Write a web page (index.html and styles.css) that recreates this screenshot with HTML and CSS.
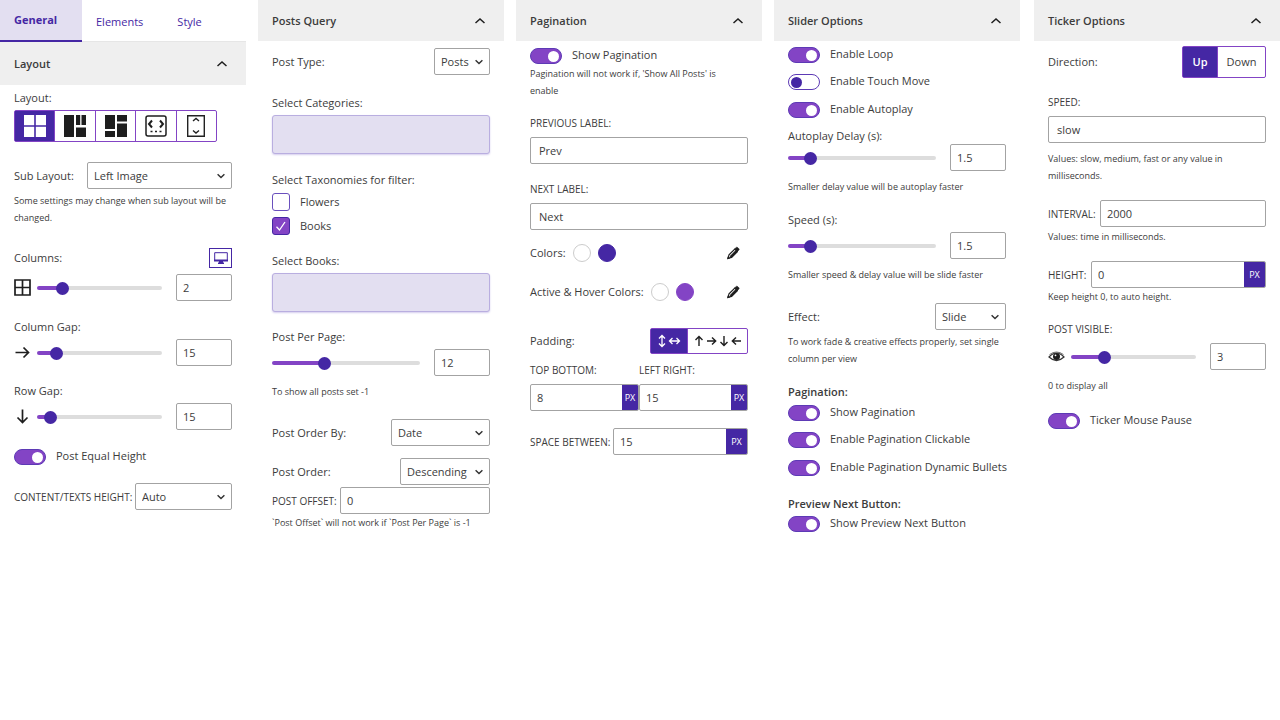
FILE: index.html
```html
<!DOCTYPE html>
<html lang="en">
<head>
<meta charset="utf-8">
<title>Block Settings</title>
<link rel="stylesheet" href="styles.css">
</head>
<body>
<svg class="defs" aria-hidden="true">
  <symbol id="up" viewBox="0 0 12 8"><path d="M1.500 6 6 2l4.500 4" fill="none" stroke="#1e1e1e" stroke-width="1.500"/></symbol>
  <symbol id="down" viewBox="0 0 8 6"><path d="M.6 1.300 4 4.500l3.400-3.200" fill="none" stroke="#333" stroke-width="1.500"/></symbol>
  <symbol id="pencil" viewBox="0 0 14 14"><path d="M2 12.300 3 8.900 8.800 3.100l2.500 2.500-5.800 5.800Z" fill="#fff" stroke="#1e1e1e" stroke-width="1.200"/><path d="M4.600 11.200 10.800 5" stroke="#1e1e1e" stroke-width="2.600"/><path d="m8.800 2.800 1.500-1.400q.7-.5 1.300.1l1.300 1.300q.5.600 0 1.200l-1.500 1.500ZM1.500 12.800l.6-2.300 1.700 1.700Z" fill="#1e1e1e" stroke="#1e1e1e" stroke-width=".6"/></symbol>
</svg>
<main class="panels">
  <section class="panel">
    <nav class="tabs">
      <button class="tab active" type="button">General</button>
      <button class="tab" type="button">Elements</button>
      <button class="tab" type="button">Style</button>
    </nav>
    <button class="head tall" type="button">Layout<svg><use href="#up"/></svg></button>
    <div class="body">
      <div class="label s4">Layout:</div>
      <div class="group layouts s3">
        <button class="on" type="button" aria-label="Grid"><svg width="22" height="22" viewBox="0 0 22 22"><path d="M0 0h10.200v10.200H0zM11.800 0H22v10.200H11.800zM0 11.800h10.200V22H0zM11.800 11.800H22V22H11.800z" fill="#fff"/></svg></button>
        <button type="button" aria-label="Masonry"><svg width="22" height="22" viewBox="0 0 22 22"><path d="M0 0h10v22H0zM12 0h4.200v10H12zM17.500 0H22v10h-4.500zM12 12.500h10V22H12z" fill="#1e1e1e"/></svg></button>
        <button type="button" aria-label="Mosaic"><svg width="22" height="22" viewBox="0 0 22 22"><path d="M0 0h10v14H0zM12 0h10v6.500H12zM0 16h10v6H0zM12 8.500h10V22H12z" fill="#1e1e1e"/></svg></button>
        <button type="button" aria-label="Slider"><svg width="22" height="22" viewBox="0 0 22 22" fill="none" stroke="#1e1e1e" stroke-width="1.500"><rect x="1" y="1" width="20" height="20" rx="2"/><path d="M7 5.500 4 9l3 3.500M15 5.500 18 9l-3 3.500" stroke-width="2"/><path d="M5.500 16.500h2M10 16.500h2M14.500 16.500h2"/></svg></button>
        <button type="button" aria-label="Ticker"><svg width="18" height="22" viewBox="0 0 18 22" fill="none" stroke="#222" stroke-width="1.400"><path d="M.7.700h16.600v20.600H.7zM6 6l3-2.500L12 6M6 15.500 9 18l3-2.500"/></svg></button>
      </div>
      <div class="row s20">
        <label class="label" for="sub">Sub Layout:</label>
        <span class="select w-sub"><select id="sub"><option>Left Image</option></select><svg><use href="#down"/></svg></span>
      </div>
      <p class="help s3">Some settings may change when sub layout will be changed.</p>
      <div class="row s22">
        <label class="label" for="cols">Columns:</label>
        <button class="device" type="button" aria-label="Desktop"><svg width="14" height="12" viewBox="0 0 14 12"><path d="M.7.700h12.600v7.800H.7z" fill="none" stroke="#4527a4"/><path d="M0 7.500h14v2H9v1h1V12H4v-1.500h1v-1H0z" fill="#4527a4"/></svg></button>
      </div>
      <div class="slide s6">
        <svg class="ico" viewBox="0 0 17 17"><path d="M1 1h15v15H1zM8.500 1v15M1 8.500h15" fill="none" stroke="#1e1e1e" stroke-width="1.700"/></svg>
        <input class="range" type="range" aria-label="Columns" value="17" style="--fill:20%">
        <input class="num" id="cols" type="text" value="2">
      </div>
      <label class="label s17" for="cgap">Column Gap:</label>
      <div class="slide s3">
        <svg class="ico" viewBox="0 0 17 17"><path d="M1.500 8.500h13M9.500 3.500l5 5-5 5" fill="none" stroke="#1e1e1e" stroke-width="1.700"/></svg>
        <input class="range" type="range" aria-label="Column gap" value="12" style="--fill:16%">
        <input class="num" id="cgap" type="text" value="15">
      </div>
      <label class="label s16" for="rgap">Row Gap:</label>
      <div class="slide s3">
        <svg class="ico" viewBox="0 0 17 17"><path d="M8.500 1.500v13M3.500 9.500l5 5 5-5" fill="none" stroke="#1e1e1e" stroke-width="1.700"/></svg>
        <input class="range" type="range" aria-label="Row gap" value="6" style="--fill:11%">
        <input class="num" id="rgap" type="text" value="15">
      </div>
      <label class="toggle s17"><input type="checkbox" checked>Post Equal Height</label>
      <div class="row s18">
        <label class="caps" for="cth">Content/Texts Height:</label>
        <span class="select w-auto"><select id="cth"><option>Auto</option></select><svg><use href="#down"/></svg></span>
      </div>
    </div>
  </section>

  <section class="panel">
    <button class="head" type="button">Posts Query<svg><use href="#up"/></svg></button>
    <div class="body">
      <div class="row s7">
        <label class="label" for="ptype">Post Type:</label>
        <span class="select w-posts"><select id="ptype"><option>Posts</option></select><svg><use href="#down"/></svg></span>
      </div>
      <label class="label s19" for="cats">Select Categories:</label>
      <input class="tokens s3" id="cats" type="text">
      <div class="label s17">Select Taxonomies for filter:</div>
      <label class="check s4"><input type="checkbox"><svg viewBox="0 0 18 18"></svg>Flowers</label>
      <label class="check s6"><input type="checkbox" checked><svg viewBox="0 0 18 18"><path d="m4.500 9.800 3 3.200L13 5" fill="none" stroke="#fff" stroke-width="1.300"/></svg>Books</label>
      <label class="label s17" for="books">Select Books:</label>
      <input class="tokens s3" id="books" type="text">
      <label class="label s16" for="ppp">Post Per Page:</label>
      <div class="slide s3">
        <input class="range" type="range" aria-label="Post per page" value="34" style="--fill:36%">
        <input class="num" id="ppp" type="text" value="12">
      </div>
      <p class="help s7">To show all posts set -1</p>
      <div class="row s19">
        <label class="label" for="oby">Post Order By:</label>
        <span class="select w-date"><select id="oby"><option>Date</option></select><svg><use href="#down"/></svg></span>
      </div>
      <div class="row s12">
        <label class="label" for="ord">Post Order:</label>
        <span class="select w-desc"><select id="ord"><option>Descending</option></select><svg><use href="#down"/></svg></span>
      </div>
      <div class="row s2">
        <label class="caps" for="off">Post Offset:</label>
        <input class="text w-offset" id="off" type="text" value="0">
      </div>
      <p class="help">`Post Offset` will not work if `Post Per Page` is -1</p>
    </div>
  </section>

  <section class="panel">
    <button class="head" type="button">Pagination<svg><use href="#up"/></svg></button>
    <div class="body">
      <label class="toggle s5"><input type="checkbox" checked>Show Pagination</label>
      <p class="help s1">Pagination will not work if, 'Show All Posts' is enable</p>
      <label class="caps s15" for="prev">Previous Label:</label>
      <input class="text s5" id="prev" type="text" value="Prev">
      <label class="caps s16" for="next">Next Label:</label>
      <input class="text s5" id="next" type="text" value="Next">
      <div class="colors s14">
        <span class="label">Colors:</span><i class="dot"></i><i class="dot deep"></i>
        <button class="edit" type="button" aria-label="Edit colors"><svg><use href="#pencil"/></svg></button>
      </div>
      <div class="colors s21">
        <span class="label">Active &amp; Hover Colors:</span><i class="dot"></i><i class="dot violet"></i>
        <button class="edit" type="button" aria-label="Edit active and hover colors"><svg><use href="#pencil"/></svg></button>
      </div>
      <div class="row s27">
        <span class="label">Padding:</span>
        <div class="group sides">
          <button class="on" type="button" aria-label="Vertical and horizontal"><svg width="24" height="14" viewBox="0 0 24 14" fill="none" stroke="#fff" stroke-width="1.300"><path d="M5 1.500v11M2 4.500l3-3 3 3M2 9.500l3 3 3-3M12.500 7h10M15.500 4l-3 3 3 3M19.500 4l3 3-3 3"/></svg></button>
          <button type="button" aria-label="Each side"><svg width="48" height="12" viewBox="0 0 48 12" fill="none" stroke="#1e1e1e" stroke-width="1.400"><path d="M5 11V1.500M1.500 5 5 1.500 8.500 5M13 6h9M18 2.500 21.700 6 18 9.500M30 1v9.500M26.500 7l3.500 3.500L33.500 7M47 6h-9M42 2.500 38.300 6 42 9.500"/></svg></button>
        </div>
      </div>
      <div class="pair s7">
        <div>
          <label class="caps" for="tb">Top Bottom:</label>
          <span class="unit s5"><input id="tb" type="text" value="8"><b>PX</b></span>
        </div>
        <div>
          <label class="caps" for="lr">Left Right:</label>
          <span class="unit s5"><input id="lr" type="text" value="15"><b>PX</b></span>
        </div>
      </div>
      <div class="row s17">
        <label class="caps" for="sb">Space Between:</label>
        <span class="unit w-space"><input id="sb" type="text" value="15"><b>PX</b></span>
      </div>
    </div>
  </section>

  <section class="panel">
    <button class="head" type="button">Slider Options<svg><use href="#up"/></svg></button>
    <div class="body">
      <label class="toggle s4"><input type="checkbox" checked>Enable Loop</label>
      <label class="toggle s9"><input type="checkbox">Enable Touch Move</label>
      <label class="toggle s10"><input type="checkbox" checked>Enable Autoplay</label>
      <label class="label tight s10" for="delay">Autoplay Delay (s):</label>
      <div class="slide">
        <input class="range" type="range" aria-label="Autoplay delay" value="12" style="--fill:16%">
        <input class="num" id="delay" type="text" value="1.5">
      </div>
      <p class="help s7">Smaller delay value will be autoplay faster</p>
      <label class="label tight s17" for="speed">Speed (s):</label>
      <div class="slide s4">
        <input class="range" type="range" aria-label="Speed" value="12" style="--fill:16%">
        <input class="num" id="speed" type="text" value="1.5">
      </div>
      <p class="help s7">Smaller speed &amp; delay value will be slide faster</p>
      <div class="row s20">
        <label class="label" for="fx">Effect:</label>
        <span class="select w-slide"><select id="fx"><option>Slide</option></select><svg><use href="#down"/></svg></span>
      </div>
      <p class="help s3">To work fade &amp; creative effects properly, set single column per view</p>
      <h3 class="sub s16">Pagination:</h3>
      <label class="toggle s2"><input type="checkbox" checked>Show Pagination</label>
      <label class="toggle s9"><input type="checkbox" checked>Enable Pagination Clickable</label>
      <label class="toggle s10"><input type="checkbox" checked>Enable Pagination Dynamic Bullets</label>
      <h3 class="sub s19">Preview Next Button:</h3>
      <label class="toggle s1"><input type="checkbox" checked>Show Preview Next Button</label>
    </div>
  </section>

  <section class="panel">
    <button class="head" type="button">Ticker Options<svg><use href="#up"/></svg></button>
    <div class="body">
      <div class="row s5">
        <span class="label">Direction:</span>
        <div class="group words"><button class="on" type="button">Up</button><button type="button">Down</button></div>
      </div>
      <label class="caps s15" for="tspeed">Speed:</label>
      <input class="text s5" id="tspeed" type="text" value="slow">
      <p class="help s7">Values: slow, medium, fast or any value in milliseconds.</p>
      <div class="row s16">
        <label class="caps" for="int">Interval:</label>
        <input class="text w-interval" id="int" type="text" value="2000">
      </div>
      <p class="help s1">Values: time in milliseconds.</p>
      <div class="row s16">
        <label class="caps" for="hgt">Height:</label>
        <span class="unit w-height"><input id="hgt" type="text" value="0"><b>PX</b></span>
      </div>
      <p class="help">Keep height 0, to auto height.</p>
      <label class="caps s15" for="vis">Post Visible:</label>
      <div class="slide s5">
        <svg class="ico" viewBox="0 0 17 17"><path d="M1 9q7.500-8 15 0-7.500 7-15 0Z" fill="#fff" stroke="#333" stroke-width="1.200"/><path d="M1.500 6.500q7-5 14 0" fill="none" stroke="#555" stroke-width=".8"/><circle cx="8.500" cy="8.500" r="3.500" fill="#1e1e1e"/><circle cx="7.500" cy="7.300" r=".9" fill="#fff"/></svg>
        <input class="range" type="range" aria-label="Post visible" value="24" style="--fill:26%">
        <input class="num" id="vis" type="text" value="3">
      </div>
      <p class="help s7">0 to display all</p>
      <label class="toggle s17"><input type="checkbox" checked>Ticker Mouse Pause</label>
    </div>
  </section>
</main>
</body>
</html>
```
FILE: styles.css
```css
:root {
  --deep: #4527a4;
  --violet: #8344c5;
  --tint: #e3dff1;
  --line: #a3a3a3;
}
* { box-sizing: border-box; }
body {
  margin: 0;
  background: #fff;
  color: #3c3c3c;
  font: 11px/18px "Open Sans", "Noto Sans", sans-serif;
}
button, input, select { margin: 0; font: inherit; color: inherit; }
button { padding: 0; border: 0; background: none; }
.defs { display: none; }

.panels { display: grid; grid-template-columns: repeat(4, minmax(0, 246fr)) minmax(0, 248fr); column-gap: 12px; align-items: start; }
.panel:last-child { margin-left: 2px; }
.body { padding: 0 14px 20px; }

.tabs { display: flex; height: 42px; border-bottom: 1px solid #e6e6e6; }
.tab { padding: 2px 14px 0; color: var(--deep); font-weight: 500; }
.tab + .tab { padding: 2px 20px 0 14px; }
.tab.active { width: 82px; height: 42px; padding: 0 14px; text-align: left; background: var(--tint); border-bottom: 2px solid var(--deep); font-weight: 700; }

.head { display: flex; align-items: center; justify-content: space-between; width: 100%; height: 41px; padding: 0 18px 0 14px; background: #efefef; font-weight: 600; }
.head.tall { height: 43px; }
.head svg { width: 12px; height: 8px; }

.label { display: block; }
.tight { line-height: 16px; }
.caps { display: block; font-size: 10px; text-transform: uppercase; white-space: nowrap; }
.sub { margin-bottom: 0; font-size: 11px; font-weight: 600; }
.help { margin: 0; padding-right: 2px; font-size: 9px; line-height: 17px; }
.row { display: flex; align-items: center; justify-content: space-between; }

.group { display: flex; border: 1px solid var(--violet); border-radius: 2px; }
.group button { display: flex; align-items: center; justify-content: center; }
.group button + button { border-left: 1px solid var(--violet); }
.group .on { background: var(--deep); color: #fff; font-weight: 600; }
.layouts { width: 203px; height: 32px; }
.layouts button { flex: 1; }
.sides { width: 98px; height: 26px; }
.sides .on { width: 36px; }
.sides button + button { flex: 1; }
.words { height: 32px; }
.words .on { width: 34px; }
.words button + button { width: 48px; }
.device { display: flex; align-items: center; justify-content: center; width: 23px; height: 20px; border: 1px solid var(--deep); }

.text, .num, .select select, .unit { height: 27px; border: 1px solid var(--line); border-radius: 2px; background: #fff; }
.text { display: block; width: 100%; padding: 0 8px; }
.num { flex: none; width: 56px; padding: 0 6px; }
.select { display: grid; align-items: center; }
.select select, .select svg { grid-area: 1 / 1; }
.select select { width: 100%; padding: 0 6px; appearance: none; }
.select svg { justify-self: end; width: 8px; height: 6px; margin-right: 7px; pointer-events: none; }
.unit { display: flex; overflow: hidden; }
.unit input { flex: 1; min-width: 0; padding: 0 6px; border: 0; background: none; }
.unit b { display: flex; align-items: center; justify-content: center; width: 21px; background: var(--deep); color: #fff; font-size: 9px; font-weight: 500; }
.pair { display: grid; grid-template-columns: repeat(2, minmax(0, 1fr)); }
.pair .unit b { width: 16px; }
.w-sub { width: 145px; }
.w-auto { width: 97px; }
.w-posts { width: 56px; }
.w-date { width: 99px; }
.w-desc { width: 90px; }
.w-slide { width: 71px; }
.w-offset { width: 150px; padding: 0 6px; }
.w-interval { width: 166px; padding: 0 6px; }
.w-height { width: 175px; }
.w-space { width: 135px; }

.tokens { display: block; width: 100%; height: 39px; padding: 0 8px; border: 1px solid #b9aee0; border-radius: 3px; background: var(--tint); box-shadow: 0 1px 2px #d5cdee; }

.slide { display: flex; align-items: center; height: 27px; }
.ico { flex: none; width: 17px; height: 17px; margin-right: 6px; }
.range { flex: 1; min-width: 0; height: 14px; margin-right: 14px; appearance: none; background: none; }
.range::-webkit-slider-runnable-track { height: 4px; border-radius: 2px; background: linear-gradient(to right, var(--violet) var(--fill), #ddd var(--fill)); }
.range::-webkit-slider-thumb { width: 13px; height: 13px; margin-top: -4px; border-radius: 50%; appearance: none; background: var(--deep); }

.toggle { display: flex; gap: 10px; height: 18px; white-space: nowrap; }
.toggle input { align-self: flex-end; display: flex; align-items: center; flex: none; width: 32px; height: 16px; padding: 0 2px; border: 1px solid #5d3ab5; border-radius: 8px; appearance: none; background: #fff; }
.toggle input::before { content: ""; width: 11px; height: 11px; border-radius: 50%; background: var(--deep); }
.toggle input:checked { justify-content: flex-end; background: var(--violet); }
.toggle input:checked::before { background: #fff; }

.check { display: grid; grid-template-columns: 18px auto; column-gap: 10px; }
.check input, .check svg { grid-area: 1 / 1; width: 18px; height: 18px; }
.check input { border: 1px solid #6a50bd; border-radius: 3px; appearance: none; background: #fff; }
.check input:checked { background: var(--violet); border-color: var(--deep); }
.check svg { z-index: 1; pointer-events: none; }

.colors { display: flex; align-items: center; height: 18px; gap: 7px; }
.dot { width: 18px; height: 18px; border: 1px solid #ccc; border-radius: 50%; }
.deep { background: var(--deep); border-color: var(--deep); }
.violet { background: var(--violet); border-color: var(--violet); }
.edit { display: flex; margin-left: auto; margin-right: 8px; }
.edit svg { width: 14px; height: 14px; }

.s1 { margin-top: 1px; }
.s2 { margin-top: 2px; }
.s3 { margin-top: 3px; }
.s4 { margin-top: 4px; }
.s5 { margin-top: 5px; }
.s6 { margin-top: 6px; }
.s7 { margin-top: 7px; }
.s9 { margin-top: 9px; }
.s10 { margin-top: 10px; }
.s12 { margin-top: 12px; }
.s14 { margin-top: 14px; }
.s15 { margin-top: 15px; }
.s16 { margin-top: 16px; }
.s17 { margin-top: 17px; }
.s18 { margin-top: 18px; }
.s19 { margin-top: 19px; }
.s20 { margin-top: 20px; }
.s21 { margin-top: 21px; }
.s22 { margin-top: 22px; }
.s27 { margin-top: 27px; }
```
